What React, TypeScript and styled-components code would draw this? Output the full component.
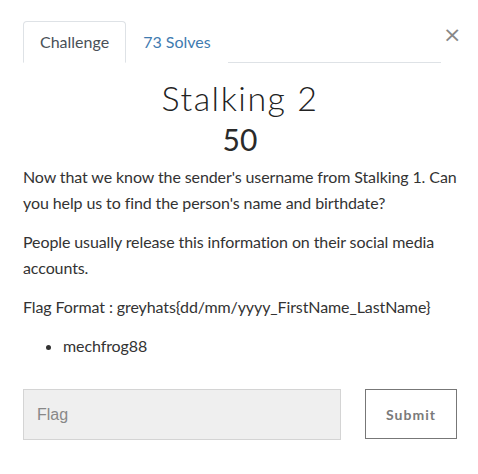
import React from 'react';
import styled, { createGlobalStyle } from 'styled-components';

const GlobalStyle = createGlobalStyle`
  body {
    margin: 0;
    background: #fff;
    font-family: Lato, "Open Sans", sans-serif;
    color: #333;
  }
`;

const Modal = styled.div`
  width: 434px;
  padding: 21px 21px 0 23px;
`;

const Header = styled.div`
  display: flex;
  align-items: flex-start;
`;

const Tabs = styled.ul`
  flex: 1;
  display: flex;
  list-style: none;
  margin: 0;
  padding: 0;
  border-bottom: 1px solid #dee2e6;
`;

const Tab = styled.li<{ $active?: boolean }>`
  margin-bottom: -1px;
  padding: 8px 16px;
  font-size: 16px;
  line-height: 24px;
  border: 1px solid ${p => (p.$active ? '#dee2e6' : 'transparent')};
  border-bottom-color: ${p => (p.$active ? '#fff' : 'transparent')};
  border-radius: 4px 4px 0 0;
  background: #fff;
  color: ${p => (p.$active ? '#495057' : '#3f7bb0')};
`;

const Close = styled.button`
  border: 0;
  background: none;
  padding: 0;
  margin: 3px 0 0 2px;
  width: 14px;
  font-family: "DejaVu Sans", sans-serif;
  font-size: 22px;
  line-height: 22px;
  color: #888;
`;

const Title = styled.h3`
  margin: 15px 0 0;
  text-align: center;
  font-family: Lato, sans-serif;
  font-weight: 300;
  font-size: 34px;
  line-height: 40px;
  letter-spacing: 1.5px;
  color: #222;
`;

const Points = styled.h4`
  margin: 3px 0 0;
  text-align: center;
  font-weight: 400;
  font-size: 30px;
  line-height: 36px;
  color: #2a2a2a;
`;

const Body = styled.div`
  margin-top: 7px;
  font-size: 16px;
  line-height: 26px;
  letter-spacing: -0.1px;
  color: #333;

  p {
    margin: 0 0 13px;
  }

  ul {
    margin: 0;
    padding-left: 40px;
  }
`;

const Form = styled.form`
  display: flex;
  gap: 24px;
  margin-top: 30px;
`;

const FlagInput = styled.input`
  flex: 1;
  height: 51px;
  box-sizing: border-box;
  border: 1px solid #d4d4d4;
  background: #efefef;
  padding: 0 13px;
  font-family: "Liberation Sans", Arial, sans-serif;
  font-size: 16px;
  outline: none;

  &::placeholder {
    color: #888;
  }
`;

const SubmitButton = styled.button`
  width: 92px;
  height: 50px;
  box-sizing: border-box;
  border: 1px solid #777;
  background: #fff;
  font-family: Lato, sans-serif;
  font-weight: 700;
  font-size: 14px;
  letter-spacing: 1px;
  color: #7a7a7a;
`;

export default function App() {
  return (
    <Modal>
      <GlobalStyle />
      <Header>
        <Tabs>
          <Tab $active>Challenge</Tab>
          <Tab>73 Solves</Tab>
        </Tabs>
        <Close aria-label="Close">×</Close>
      </Header>
      <Title>Stalking 2</Title>
      <Points>50</Points>
      <Body>
        <p>
          Now that we know the sender's username from Stalking 1. Can you help us to find the
          person's name and birthdate?
        </p>
        <p>People usually release this information on their social media accounts.</p>
        <p>Flag Format : greyhats{'{'}dd/mm/yyyy_FirstName_LastName{'}'}</p>
        <ul>
          <li>mechfrog88</li>
        </ul>
      </Body>
      <Form onSubmit={e => e.preventDefault()}>
        <FlagInput placeholder="Flag" />
        <SubmitButton type="submit">Submit</SubmitButton>
      </Form>
    </Modal>
  );
}
